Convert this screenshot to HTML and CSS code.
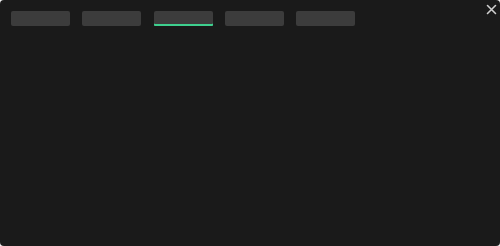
FILE: index.html
```html
<!DOCTYPE html>
<html>
<head>
<meta charset="utf-8">
<link rel="stylesheet" href="styles.css">
</head>
<body>
<div class="panel">
  <div class="tabs">
    <div class="tab"></div>
    <div class="tab"></div>
    <div class="tab active"></div>
    <div class="tab"></div>
    <div class="tab"></div>
  </div>
  <button class="close" aria-label="Close">
    <svg width="11" height="11" viewBox="0 0 11 11"><path d="M1.5 1.5L9.5 9.5M9.5 1.5L1.5 9.5" stroke="#cfcfcf" stroke-width="1.6" stroke-linecap="round" fill="none"/></svg>
  </button>
</div>
</body>
</html>
```
FILE: styles.css
```css
html, body {
  margin: 0;
  padding: 0;
  background: #f2f2f2;
}
.panel {
  position: relative;
  width: 500px;
  height: 246px;
  box-sizing: border-box;
  background: #1a1a1a;
  border-radius: 4px;
  padding: 11px 0 0 11px;
  overflow: hidden;
}
.tabs {
  display: flex;
  gap: 12.3px;
}
.tab {
  width: 59px;
  height: 15px;
  background: #3c3c3c;
  border-radius: 2px;
}
.tab.active {
  box-shadow: inset 0 -2px 0 #3ecf8e;
  border-radius: 2px 2px 1px 1px;
}
.close {
  position: absolute;
  top: 4px;
  right: 3px;
  width: 11px;
  height: 11px;
  padding: 0;
  border: 0;
  background: transparent;
  display: flex;
}
```
